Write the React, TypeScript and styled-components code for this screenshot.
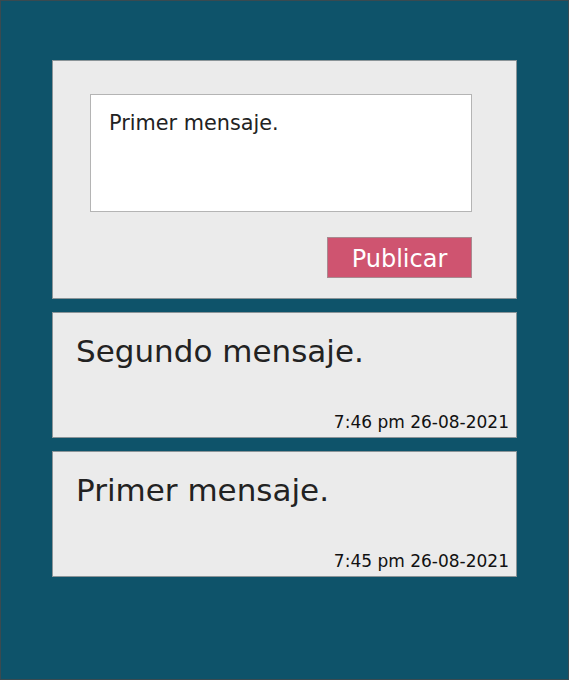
import React from "react";
import styled, { createGlobalStyle } from "styled-components";

const Global = createGlobalStyle`
  html, body { margin: 0; padding: 0; }
  body { font-family: "DejaVu Sans", Verdana, sans-serif; background: #0e536a; }
  * { box-sizing: border-box; }
`;

const Page = styled.div`
  width: 569px;
  height: 680px;
  background: #0e536a;
  border: 1px solid #3a4a50;
  padding: 59px 0 0 51px;
  display: flex;
  flex-direction: column;
  align-items: flex-start;
  gap: 13px;
`;

const Card = styled.div`
  width: 465px;
  background: #ebebeb;
  border: 1px solid #8a9498;
`;

const Composer = styled(Card)`
  height: 239px;
  padding: 33px 0 20px 37px;
  display: flex;
  flex-direction: column;
  align-items: flex-start;
`;

const Form = styled.div`
  width: 382px;
  display: flex;
  flex-direction: column;
  gap: 25px;
`;

const Input = styled.textarea`
  width: 382px;
  height: 118px;
  background: #ffffff;
  border: 1px solid #b4b4b4;
  padding: 16px 18px;
  font-family: "DejaVu Sans", Verdana, sans-serif;
  font-size: 20.8px;
  color: #222;
  resize: none;
  outline: none;
  margin: 0;
  display: block;
`;

const Button = styled.button`
  align-self: flex-end;
  width: 145px;
  height: 41px;
  background: #cf5470;
  border: 1px solid #a88a90;
  color: #fff;
  font-family: "DejaVu Sans", Verdana, sans-serif;
  font-size: 24px;
  padding: 3px 0 0;
  margin: 0;
`;

const Message = styled(Card)`
  height: 126px;
  padding: 20px 7px 5px 23px;
  display: flex;
  flex-direction: column;
`;

const Text = styled.div`
  font-size: 31px;
  color: #222;
`;

const Stamp = styled.div`
  margin-top: auto;
  align-self: flex-end;
  font-size: 17px;
  color: #111;
`;

const messages = [
  { text: "Segundo mensaje.", time: "7:46 pm 26-08-2021" },
  { text: "Primer mensaje.", time: "7:45 pm 26-08-2021" },
];

export default function App() {
  return (
    <>
      <Global />
      <Page>
        <Composer>
          <Form>
            <Input defaultValue="Primer mensaje." />
            <Button>Publicar</Button>
          </Form>
        </Composer>
        {messages.map((m) => (
          <Message key={m.time}>
            <Text>{m.text}</Text>
            <Stamp>{m.time}</Stamp>
          </Message>
        ))}
      </Page>
    </>
  );
}
